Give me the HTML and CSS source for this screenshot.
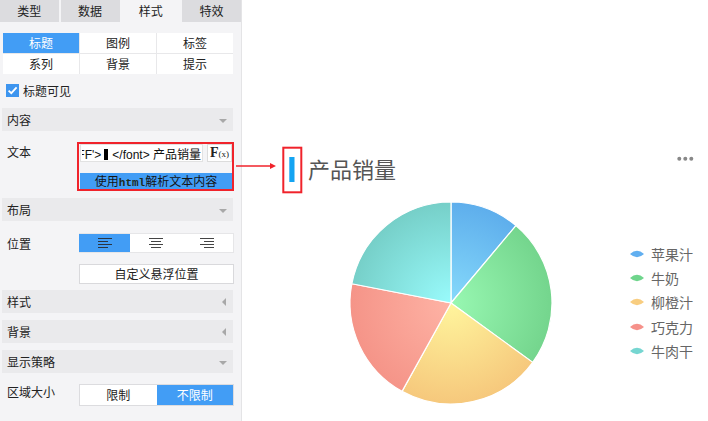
FILE: index.html
```html
<!DOCTYPE html>
<html lang="zh-CN">
<head>
<meta charset="utf-8">
<title>图表样式</title>
<link rel="stylesheet" href="styles.css">
</head>
<body>
<div class="app">
  <aside class="panel">
    <div class="tabs">
      <div class="tab">类型</div>
      <div class="tab">数据</div>
      <div class="tab active">样式</div>
      <div class="tab">特效</div>
    </div>

    <div class="subtabs">
      <div class="st active">标题</div>
      <div class="st">图例</div>
      <div class="st">标签</div>
      <div class="st">系列</div>
      <div class="st">背景</div>
      <div class="st">提示</div>
    </div>

    <div class="check">
      <span class="box"><svg width="13" height="13" viewBox="0 0 13 13"><path d="M2.6 6.6 L5.3 9.2 L10.6 3.4" fill="none" stroke="#fff" stroke-width="1.8"/></svg></span>
      <span>标题可见</span>
    </div>

    <div class="sec"><span>内容</span><i class="tri-down"></i></div>

    <div class="row text-row">
      <div class="lbl">文本</div>
      <div class="hl">
        <div class="input-line">
          <div class="input"><span class="src"><span class="cut">F</span>F'&gt;<span class="blk"></span>&lt;/font&gt; 产品销量</span></div>
          <div class="fx"><span class="fx-f">F</span><span class="fx-x">(x)</span></div>
        </div>
        <div class="html-btn">使用<span class="mono">html</span>解析文本内容</div>
      </div>
    </div>

    <div class="sec sec-gap"><span>布局</span><i class="tri-down"></i></div>

    <div class="row pos-row">
      <div class="lbl">位置</div>
      <div class="seg">
        <div class="seg-item on">
          <svg width="14" height="11" viewBox="0 0 14 11"><g stroke="#2b3440" stroke-width="1"><path d="M0 0.5H14M0 3.5H10M0 6.5H14M0 9.5H10"/></g></svg>
        </div>
        <div class="seg-item">
          <svg width="14" height="11" viewBox="0 0 14 11"><g stroke="#444" stroke-width="1"><path d="M0 0.5H14M2 3.5H12M0 6.5H14M2 9.5H12"/></g></svg>
        </div>
        <div class="seg-item">
          <svg width="14" height="11" viewBox="0 0 14 11"><g stroke="#444" stroke-width="1"><path d="M0 0.5H14M4 3.5H14M0 6.5H14M4 9.5H14"/></g></svg>
        </div>
      </div>
    </div>

    <div class="row custom-row">
      <div class="lbl"></div>
      <div class="btn">自定义悬浮位置</div>
    </div>

    <div class="sec sec-s1"><span>样式</span><i class="tri-left"></i></div>
    <div class="sec sec-s2"><span>背景</span><i class="tri-left"></i></div>
    <div class="sec sec-s2"><span>显示策略</span><i class="tri-down"></i></div>

    <div class="row size-row">
      <div class="lbl lbl-top">区域大小</div>
      <div class="seg2">
        <div class="seg2-item">限制</div>
        <div class="seg2-item on">不限制</div>
      </div>
    </div>
  </aside>

  <main class="chart">
    <svg class="chart-svg" width="466" height="421" viewBox="242 0 466 421">
      <defs>
        <radialGradient id="gBlue" gradientUnits="userSpaceOnUse" cx="451" cy="303" r="101">
          <stop offset="0" stop-color="#86dafb"/><stop offset="1" stop-color="#5eaeec"/>
        </radialGradient>
        <radialGradient id="gGreen" gradientUnits="userSpaceOnUse" cx="451" cy="303" r="101">
          <stop offset="0" stop-color="#98f8b2"/><stop offset="1" stop-color="#74d58d"/>
        </radialGradient>
        <radialGradient id="gYellow" gradientUnits="userSpaceOnUse" cx="451" cy="303" r="101">
          <stop offset="0" stop-color="#fff59d"/><stop offset="1" stop-color="#f6c87c"/>
        </radialGradient>
        <radialGradient id="gRed" gradientUnits="userSpaceOnUse" cx="451" cy="303" r="101">
          <stop offset="0" stop-color="#feb3a5"/><stop offset="1" stop-color="#f59488"/>
        </radialGradient>
        <radialGradient id="gCyan" gradientUnits="userSpaceOnUse" cx="451" cy="303" r="101">
          <stop offset="0" stop-color="#99fbfc"/><stop offset="1" stop-color="#76cfc8"/>
        </radialGradient>
      </defs>
      <rect x="289.3" y="157" width="5.2" height="25" fill="#14a4f2"/>
      <g fill="#888">
        <circle cx="679.3" cy="158.8" r="2"/>
        <circle cx="685.3" cy="158.8" r="2"/>
        <circle cx="691.3" cy="158.8" r="2"/>
      </g>
      <g stroke="#fff" stroke-width="1.2" stroke-linejoin="round">
        <path d="M451 303 L451 202 A101 101 0 0 1 515.92 225.63 Z" fill="url(#gBlue)"/>
        <path d="M451 303 L515.92 225.63 A101 101 0 0 1 532.71 362.37 Z" fill="url(#gGreen)"/>
        <path d="M451 303 L532.71 362.37 A101 101 0 0 1 402.03 391.34 Z" fill="url(#gYellow)"/>
        <path d="M451 303 L402.03 391.34 A101 101 0 0 1 351.86 283.73 Z" fill="url(#gRed)"/>
        <path d="M451 303 L351.86 283.73 A101 101 0 0 1 451 202 Z" fill="url(#gCyan)"/>
      </g>
    </svg>

    <div class="chart-title">产品销量</div>

    <ul class="legend">
      <li class="legend-item"><svg class="mk" width="14" height="8" viewBox="0 0 14 8"><path d="M0 4 Q7 -2.5 14 4 Q7 10.5 0 4Z" fill="#61aff0"/></svg>苹果汁</li>
      <li class="legend-item"><svg class="mk" width="14" height="8" viewBox="0 0 14 8"><path d="M0 4 Q7 -2.5 14 4 Q7 10.5 0 4Z" fill="#6fd58c"/></svg>牛奶</li>
      <li class="legend-item"><svg class="mk" width="14" height="8" viewBox="0 0 14 8"><path d="M0 4 Q7 -2.5 14 4 Q7 10.5 0 4Z" fill="#f8cd80"/></svg>柳橙汁</li>
      <li class="legend-item"><svg class="mk" width="14" height="8" viewBox="0 0 14 8"><path d="M0 4 Q7 -2.5 14 4 Q7 10.5 0 4Z" fill="#f6918a"/></svg>巧克力</li>
      <li class="legend-item"><svg class="mk" width="14" height="8" viewBox="0 0 14 8"><path d="M0 4 Q7 -2.5 14 4 Q7 10.5 0 4Z" fill="#76d6d1"/></svg>牛肉干</li>
    </ul>
  </main>
</div>

<svg class="annot" width="708" height="421" viewBox="0 0 708 421">
  <path d="M236 166 H271" stroke="#f0232b" stroke-width="1.5" fill="none"/>
  <path d="M276 166 L270 163 L270 169 Z" fill="#f0232b"/>
  <rect x="283.3" y="147.7" width="18" height="44.6" fill="none" stroke="#f0232b" stroke-width="2"/>
</svg>
</body>
</html>
```

FILE: styles.css
```css
* { box-sizing: border-box; }
html, body { margin: 0; padding: 0; }
body {
  width: 708px;
  height: 421px;
  overflow: hidden;
  position: relative;
  background: #fff;
  color: #333;
  font-family: "Noto Sans CJK SC", "Liberation Sans", sans-serif;
  font-size: 12px;
}
.app { display: flex; height: 421px; }

/* ---------- left panel ---------- */
.panel {
  width: 242px;
  flex: none;
  background: #f4f4f6;
  border-right: 1px solid #e4e4e6;
}
.tabs {
  display: grid;
  grid-template-columns: repeat(4, 1fr);
  column-gap: 2px;
  height: 22px;
}
.tab {
  background: #dcdcdf;
  text-align: center;
  line-height: 22px;
  color: #222;
}
.tab.active { background: #f4f4f6; }

.subtabs {
  margin: 11px 0 0 3px;
  width: 230px;
  display: grid;
  grid-template-columns: repeat(3, 1fr);
  grid-auto-rows: 20px;
  gap: 1px;
  background: #e8e8ea;
}
.st {
  background: #fff;
  text-align: center;
  line-height: 20px;
  color: #222;
}
.st.active { background: #429df5; color: #fff; }

.check {
  display: flex;
  align-items: center;
  gap: 4px;
  margin: 10px 0 0 6px;
  height: 13px;
  line-height: 13px;
  color: #222;
}
.box {
  width: 13px;
  height: 13px;
  background: #3d95ef;
  display: block;
}
.box svg { display: block; }

.sec {
  margin: 11px 0 0 2px;
  width: 231px;
  height: 23px;
  background: #eaeaec;
  display: flex;
  align-items: center;
  justify-content: space-between;
  padding: 0 6px 0 5px;
  color: #222;
}
.sec-gap { margin-top: 7px; }
.sec-s1 { margin-top: 6px; }
.sec-s2 { margin-top: 7px; }
.tri-down {
  width: 0; height: 0;
  border-left: 4px solid transparent;
  border-right: 4px solid transparent;
  border-top: 4px solid #a8a8a8;
  margin-top: 3px;
}
.tri-left {
  width: 0; height: 0;
  border-top: 4px solid transparent;
  border-bottom: 4px solid transparent;
  border-right: 4px solid #a8a8a8;
  margin-right: 1px;
}

.row { display: flex; padding-left: 7px; }
.lbl { width: 72px; flex: none; color: #222; }

.text-row { margin-top: 11px; }
.text-row .lbl { padding-top: 1px; line-height: 18px; }
.hl {
  margin-left: -2px;
  width: 157px;
  height: 49px;
  border: 2px solid #f0232b;
  padding-left: 1px;
}
.input-line { display: flex; gap: 4px; height: 18px; }
.input {
  flex: 1;
  min-width: 0;
  background: #fff;
  border: 1px solid #e2e2e2;
  display: flex;
  justify-content: flex-end;
  align-items: center;
  overflow: hidden;
  padding-right: 1px;
}
.src {
  white-space: nowrap;
  font-family: "Liberation Sans", "Noto Sans CJK SC", sans-serif;
  font-size: 12px;
  color: #111;
  flex: none;
}
.cut {
  display: inline-block;
  width: 3px;
  overflow: hidden;
  direction: rtl;
  vertical-align: bottom;
}
.blk {
  display: inline-block;
  width: 4px;
  height: 11px;
  margin: 0 4px 0 3px;
  background: #000;
  vertical-align: -1px;
}
.fx {
  width: 25px;
  flex: none;
  background: #fff;
  border: 1px solid #dcdcdc;
  display: flex;
  align-items: center;
  justify-content: center;
  color: #222;
}
.fx-f {
  font-family: "Liberation Serif", serif;
  font-weight: bold;
  font-size: 14px;
  line-height: 1;
}
.fx-x {
  font-family: "Liberation Serif", serif;
  font-size: 9px;
  line-height: 1;
  margin-top: 2px;
}
.html-btn {
  margin-top: 11px;
  height: 16px;
  line-height: 16px;
  background: #429df5;
  text-align: center;
  color: #151515;
  white-space: nowrap;
}
.mono {
  font-family: "Liberation Mono", monospace;
  font-weight: bold;
  font-size: 11px;
  color: #1d2a1d;
}

.pos-row { margin-top: 12px; align-items: center; height: 20px; }
.seg {
  width: 155px;
  height: 20px;
  display: grid;
  grid-template-columns: repeat(3, 1fr);
  background: #fff;
  border: 1px solid #e6e6e8;
  border-left: none;
}
.seg-item {
  display: flex;
  align-items: center;
  justify-content: center;
}
.seg-item svg { display: block; }
.seg-item.on { background: #429df5; }

.custom-row { margin-top: 11px; }
.btn {
  width: 155px;
  height: 20px;
  line-height: 18px;
  background: #fff;
  border: 1px solid #d9d9dc;
  text-align: center;
  color: #222;
}

.size-row { margin-top: 11px; }
.lbl-top { line-height: 16px; }
.seg2 {
  width: 155px;
  height: 22px;
  display: grid;
  grid-template-columns: 1fr 1fr;
  border: 1px solid #dcdcdf;
  background: #fff;
}
.seg2-item {
  text-align: center;
  line-height: 20px;
  color: #222;
}
.seg2-item.on { background: #429df5; color: #fff; }

/* ---------- chart ---------- */
.chart {
  flex: 1;
  position: relative;
  background: #fff;
}
.chart-svg { position: absolute; left: 0; top: 0; display: block; }
.chart-title {
  position: absolute;
  left: 66px;
  top: 157px;
  font-size: 22px;
  line-height: 1;
  color: #555;
  white-space: nowrap;
}
.legend {
  position: absolute;
  left: 388px;
  top: 242px;
  margin: 0;
  padding: 0;
  list-style: none;
}
.legend-item {
  display: flex;
  align-items: center;
  height: 24.2px;
  font-size: 14px;
  color: #666;
  white-space: nowrap;
}
.mk { display: block; margin-right: 7px; flex: none; }

/* ---------- annotation overlay ---------- */
.annot {
  position: absolute;
  left: 0;
  top: 0;
  pointer-events: none;
}
```
